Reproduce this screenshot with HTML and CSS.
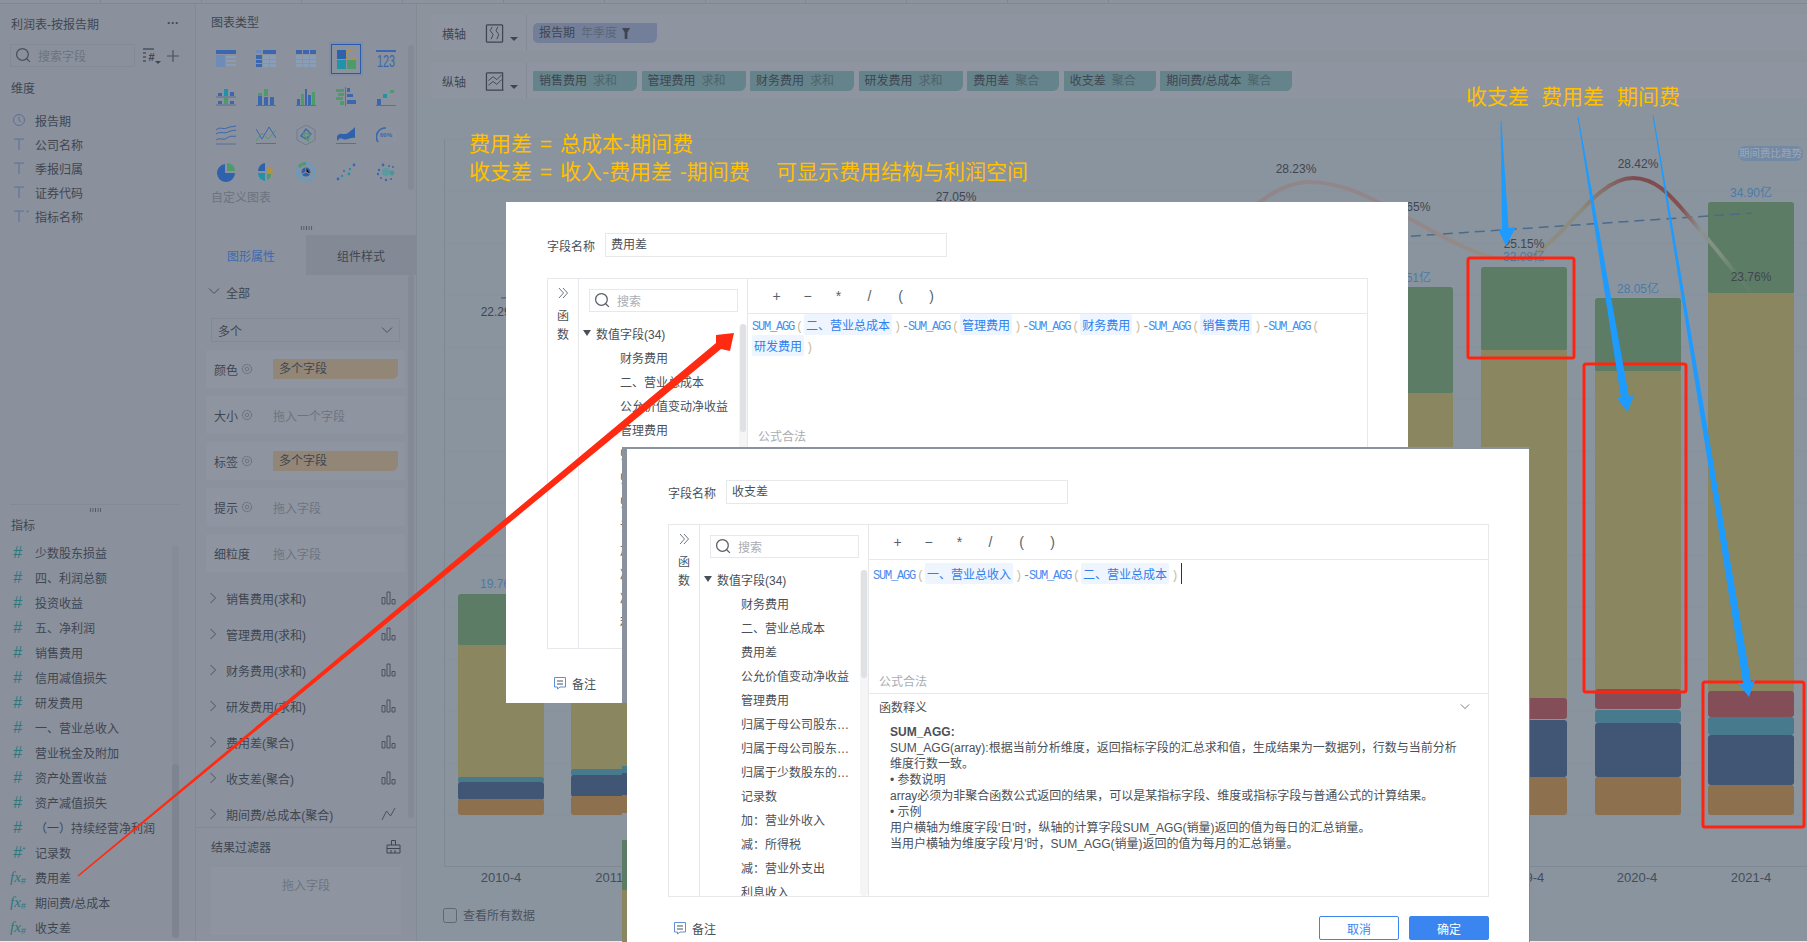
FILE: index.html
```html
<!DOCTYPE html>
<html lang="zh-CN">
<head>
    <meta charset="UTF-8">
    <title>利润表-按报告期</title>
    <link rel="stylesheet" href="styles.css">
</head>
<body>
    <!-- shared icons -->
    <svg class="sprite">
        <symbol id="i-clock" viewBox="0 0 14 14"><circle cx="7" cy="7" r="5.5" fill="none" stroke="currentColor"/><path d="M7 3.8V7.4L9.2 9" fill="none" stroke="currentColor"/></symbol>
        <symbol id="i-text" viewBox="0 0 14 14"><path d="M2 2H12M7 2V13" fill="none" stroke="currentColor"/></symbol>
        <symbol id="i-search" viewBox="0 0 16 16"><circle cx="7" cy="7" r="5.5" fill="none" stroke="currentColor" stroke-width="1.2"/><path d="M11 11L14 14" stroke="currentColor" stroke-width="1.2"/></symbol>
        <symbol id="i-gear" viewBox="0 0 12 12"><circle cx="6" cy="6" r="4.6" fill="none" stroke="currentColor" stroke-width="1.2" stroke-dasharray="2 .6"/><circle cx="6" cy="6" r="1.8" fill="none" stroke="currentColor"/></symbol>
        <symbol id="i-right" viewBox="0 0 10 12"><path d="M2.5 1L7.5 6L2.5 11" fill="none" stroke="currentColor"/></symbol>
        <symbol id="i-down" viewBox="0 0 12 8"><path d="M1 1.5L6 6.5L11 1.5" fill="none" stroke="currentColor"/></symbol>
        <symbol id="i-bars" viewBox="0 0 15 14"><path d="M1 6.5H4V13H1ZM6 1H9V13H6ZM11 8.5H14V13H11Z" fill="none" stroke="currentColor"/></symbol>
        <symbol id="i-line" viewBox="0 0 15 14"><path d="M1 13L5.5 4L9.5 9L14 1" fill="none" stroke="currentColor"/></symbol>
        <symbol id="i-note" viewBox="0 0 14 14"><path d="M1.5 1.5H12.5V11H7L4.5 13V11H1.5Z" fill="none" stroke="#5f8fd0"/><path d="M4 5H10M4 8H10" stroke="#4a5058"/></symbol>
        <symbol id="i-rail" viewBox="0 0 12 12"><path d="M2 1L6.5 6L2 11M6 1L10.5 6L6 11" fill="none" stroke="#6f7680"/></symbol>
    </svg>

    <div class="workspace">
        <div class="tabstrip">
            <i></i><i></i><i></i><i></i><i></i><i></i><i></i><i></i><i></i><i></i><i></i>
        </div>
        <div class="columns">
            <aside class="data-panel">
                <div class="dim-section">
                    <div class="data-title"><span>利润表-按报告期</span><b class="more">···</b></div>
                    <div class="search-row">
                        <div class="data-search"><svg class="search-icon"><use href="#i-search"/></svg>搜索字段</div>
                        <svg class="sort-icon" viewBox="0 0 20 20"><path d="M1 3H12M1 7H4M1 11H4M1 15H4" stroke="#4b525e" stroke-width="1.4"/><text x="6.5" y="15" class="sort-hash">#</text><path d="M13 15H19L16 18Z" fill="#3f4652"/></svg>
                        <svg class="plus-icon" viewBox="0 0 14 14"><path d="M7 1V13M1 7H13" stroke="#4b525e" stroke-width="1.2"/></svg>
                    </div>
                    <h4 class="group-title">维度</h4>
                    <ul class="dim-list">
                        <li class="field"><span class="field-icon dim"><svg><use href="#i-clock"/></svg></span>报告期</li>
                        <li class="field"><span class="field-icon dim"><svg><use href="#i-text"/></svg></span>公司名称</li>
                        <li class="field"><span class="field-icon dim"><svg><use href="#i-text"/></svg></span>季报归属</li>
                        <li class="field"><span class="field-icon dim"><svg><use href="#i-text"/></svg></span>证券代码</li>
                        <li class="field"><span class="field-icon dim"><svg><use href="#i-text"/></svg><sup>*</sup></span>指标名称</li>
                    </ul>
                </div>
                <div class="metric-section">
                    <div class="drag-dots"></div>
                    <h4 class="group-title metric-title">指标</h4>
                    <ul class="metric-list">
                        <li class="metric"><span class="metric-icon">#</span>少数股东损益</li>
                        <li class="metric"><span class="metric-icon">#</span>四、利润总额</li>
                        <li class="metric"><span class="metric-icon">#</span>投资收益</li>
                        <li class="metric"><span class="metric-icon">#</span>五、净利润</li>
                        <li class="metric"><span class="metric-icon">#</span>销售费用</li>
                        <li class="metric"><span class="metric-icon">#</span>信用减值损失</li>
                        <li class="metric"><span class="metric-icon">#</span>研发费用</li>
                        <li class="metric"><span class="metric-icon">#</span>一、营业总收入</li>
                        <li class="metric"><span class="metric-icon">#</span>营业税金及附加</li>
                        <li class="metric"><span class="metric-icon">#</span>资产处置收益</li>
                        <li class="metric"><span class="metric-icon">#</span>资产减值损失</li>
                        <li class="metric"><span class="metric-icon">#</span>（一）持续经营净利润</li>
                        <li class="metric"><span class="metric-icon">#<sup>*</sup></span>记录数</li>
                        <li class="metric"><span class="metric-icon fx">fx<small>#</small></span>费用差</li>
                        <li class="metric"><span class="metric-icon fx">fx<small>#</small></span>期间费/总成本</li>
                        <li class="metric"><span class="metric-icon fx">fx<small>#</small></span>收支差</li>
                    </ul>
                    <div class="metric-scroll"><div class="metric-thumb"></div></div>
                </div>
            </aside>

            <section class="config-panel">
                <h4 class="type-title">图表类型</h4>
                <div class="type-grid">
                    <svg class="type-icon" viewBox="0 0 20 20"><path d="M0 1H20V5H0Z" fill="#3a67ad"/><path d="M0 6H9V18H0Z" fill="#6d8cba"/><path d="M10 7H20V9H10ZM10 11H20V13H10ZM10 15H20V17H10Z" fill="#8a9db7"/></svg>
                    <svg class="type-icon" viewBox="0 0 20 20"><path d="M0 1H5L7 4H0Z" fill="#6d8cba"/><path d="M7 1H20V5H7ZM0 6H6V10H0ZM0 11H6V14H0ZM0 15H6V18H0Z" fill="#3a67ad"/><path d="M7 6H13V10H7ZM14 6H20V10H14ZM7 11H13V14H7ZM14 11H20V14H14ZM7 15H13V18H7ZM14 15H20V18H14Z" fill="#8a9db7"/></svg>
                    <svg class="type-icon" viewBox="0 0 20 20"><path d="M0 1H6V5H0ZM7 1H13V5H7ZM14 1H20V5H14Z" fill="#3a67ad"/><path d="M0 6H6V10H0ZM7 6H13V10H7ZM14 6H20V10H14ZM0 11H6V14H0ZM7 11H13V14H7ZM14 11H20V14H14ZM0 15H6V18H0ZM7 15H13V18H7ZM14 15H20V18H14Z" fill="#8a9db7"/></svg>
                    <div class="type-selected"><svg class="type-icon" viewBox="0 0 20 20"><path d="M1 1H10V10H1Z" fill="#2f62ad"/><path d="M11 1H20V10H11Z" fill="none" stroke="#b79238" stroke-width="2" stroke-dasharray="1.6 1.4"/><path d="M1 11H10V20H1Z" fill="#2193a8"/><path d="M11 11H20V20H11Z" fill="#4f9a6b"/></svg></div>
                    <svg class="type-icon" viewBox="0 0 20 20"><path d="M0 1H20V3H0Z" fill="#3a67ad"/><text x="1" y="18" textLength="18" lengthAdjust="spacingAndGlyphs" class="type-num">123</text></svg>

                    <svg class="type-icon" viewBox="0 0 20 20"><path d="M2 6H6V9H2ZM14 5H18V9H14ZM2 14H6V17H2ZM14 14H18V17H14Z" fill="#3a67ad"/><path d="M8 2H12V9H8Z" fill="#2193a8"/><path d="M8 11H12V17H8Z" fill="#4f9a6b"/><path d="M0 10H20M0 18H20" stroke="#5a6f92"/></svg>
                    <svg class="type-icon" viewBox="0 0 20 20"><path d="M2 9H6V18H2ZM14 10H18V18H14Z" fill="#3a67ad"/><path d="M8 2H12V9H8ZM2 6H6V9H2Z" fill="#4f9a6b"/><path d="M8 10H12V18H8Z" fill="#3a67ad"/><path d="M0 18.5H20" stroke="#5a6f92"/></svg>
                    <svg class="type-icon" viewBox="0 0 20 20"><path d="M1 12H4V18H1ZM12 8H15V18H12Z" fill="#3a67ad"/><path d="M5 7H8V18H5ZM16 5H19V18H16Z" fill="#4f9a6b"/><path d="M9 2H11V18H9Z" fill="#3a67ad"/><path d="M0 18.5H20" stroke="#5a6f92"/></svg>
                    <svg class="type-icon" viewBox="0 0 20 20"><path d="M0 2H8V5H0ZM0 10H7V13H0ZM4 14H8V18H4Z" fill="#4f9a6b"/><path d="M2 6H8V9H2Z" fill="#4f9a6b"/><path d="M11 1H14V5H11ZM11 7H17V10H11ZM11 13H20V17H11Z" fill="#3a67ad"/><path d="M9.5 0V19" stroke="#5a6f92"/></svg>
                    <svg class="type-icon" viewBox="0 0 20 20"><path d="M1 12H5V18H1Z" fill="#3a67ad"/><path d="M7 7H11V11H7Z" fill="#2193a8"/><path d="M14 3H18V6H14Z" fill="#4f9a6b"/><path d="M0 18.5H20" stroke="#5a6f92"/></svg>

                    <svg class="type-icon" viewBox="0 0 20 20"><path d="M0 5C4 1 7 5 11 3S17 2 20 1M0 9C4 6 8 9 12 7S17 6 20 5M0 15C4 12 7 16 11 13S17 12 20 11" fill="none" stroke="#3a67ad"/><path d="M0 19H20" stroke="#5a6f92"/></svg>
                    <svg class="type-icon" viewBox="0 0 20 20"><path d="M0 4L6 14L13 2L20 13" fill="none" stroke="#3a67ad"/><path d="M0 16L6 8L12 14L20 5" fill="none" stroke="#4f9a6b"/><path d="M0 18.5H20" stroke="#5a6f92"/></svg>
                    <svg class="type-icon" viewBox="0 0 20 20"><path d="M10 0L19 5V15L10 20L1 15V5Z" fill="none" stroke="#6f7d92"/><path d="M5 11L10 4L15 9L10 14Z" fill="none" stroke="#3a67ad" stroke-width="1.3"/><path d="M7 8L14 9L12 16Z" fill="none" stroke="#4f9a6b" stroke-width="1.3"/></svg>
                    <svg class="type-icon" viewBox="0 0 20 20"><path d="M1 11C5 6 8 11 12 8S17 4 19 2V13C15 12 10 16 7 14S3 14 1 16Z" fill="#2f62ad"/><path d="M0 18.5H20" stroke="#5a6f92"/></svg>
                    <svg class="type-icon" viewBox="0 0 20 20"><path d="M2 17A9 9 0 0 1 10 3" fill="none" stroke="#3a67ad" stroke-width="1.6"/><path d="M10 3A9 9 0 0 1 18 17" fill="none" stroke="#8a95a5" stroke-width="1.6"/><text x="10" y="12" text-anchor="middle" class="type-pct">60%</text></svg>

                    <svg class="type-icon" viewBox="0 0 20 20"><path d="M9 2A9 9 0 1 0 19 11H9Z" fill="#2f62ad"/><path d="M11 1A8 8 0 0 1 19 9H11Z" fill="#4f9a6b"/></svg>
                    <svg class="type-icon" viewBox="0 0 20 20"><path d="M9 1V9H2A8 8 0 0 1 9 1Z" fill="#2f62ad"/><path d="M11 5A6 6 0 0 1 17 11H11Z" fill="#b79238"/><path d="M11 12H15A6 6 0 0 1 11 18Z" fill="#4f9a6b"/><path d="M9 11V19A8 8 0 0 1 2 11Z" fill="#2193a8"/></svg>
                    <svg class="type-icon" viewBox="0 0 20 20"><circle cx="10" cy="10" r="8.5" fill="none" stroke="#6d9ab8" stroke-width="3"/><path d="M10 1.5A8.5 8.5 0 0 0 3 5" fill="none" stroke="#4f9a6b" stroke-width="3"/><circle cx="10" cy="10" r="4.5" fill="#2f62ad"/><path d="M10 5.5V10L14 12M10 10L6 12" stroke="#8a949e"/></svg>
                    <svg class="type-icon" viewBox="0 0 20 20"><g fill="#3a67ad"><circle cx="2" cy="17" r="1.4"/><circle cx="8" cy="9" r="1"/></g><g fill="#2193a8"><circle cx="6" cy="14" r="1.2"/><circle cx="13" cy="12" r="1.4"/><circle cx="14" cy="7" r="1.2"/></g><circle cx="18" cy="3" r="1.4" fill="#3a67ad"/></svg>
                    <svg class="type-icon" viewBox="0 0 20 20"><circle cx="10" cy="10" r="4" fill="#5b9aa0"/><circle cx="16" cy="11" r="2.4" fill="#4d9497"/><g fill="#3a67ad"><circle cx="3" cy="8" r="1.2"/><circle cx="2" cy="12" r="1.2"/><circle cx="7" cy="3" r="1.4"/><circle cx="13" cy="4" r="1"/><circle cx="17" cy="5" r="1"/><circle cx="5" cy="16" r="1"/><circle cx="10" cy="18" r="1.2"/><circle cx="15" cy="17" r="1"/></g></svg>
                </div>
                <div class="custom-label">自定义图表</div>
                <div class="type-scroll"></div>
                <div class="drag-row"><div class="drag-dots"></div></div>

                <div class="prop-tabs">
                    <div class="prop-tab active">图形属性</div>
                    <div class="prop-tab">组件样式</div>
                </div>
                <div class="prop-body">
                    <div class="prop-head"><svg class="chev-down"><use href="#i-down"/></svg>全部</div>
                    <div class="prop-select">多个<svg class="chev-down"><use href="#i-down"/></svg></div>
                    <div class="slot"><span class="slot-name">颜色<svg class="gear"><use href="#i-gear"/></svg></span><span class="slot-pill">多个字段</span></div>
                    <div class="slot"><span class="slot-name">大小<svg class="gear"><use href="#i-gear"/></svg></span><span class="slot-hint">拖入一个字段</span></div>
                    <div class="slot"><span class="slot-name">标签<svg class="gear"><use href="#i-gear"/></svg></span><span class="slot-pill">多个字段</span></div>
                    <div class="slot"><span class="slot-name">提示<svg class="gear"><use href="#i-gear"/></svg></span><span class="slot-hint">拖入字段</span></div>
                    <div class="slot"><span class="slot-name">细粒度</span><span class="slot-hint">拖入字段</span></div>
                    <div class="series-list">
                        <div class="series"><svg class="chev-right"><use href="#i-right"/></svg>销售费用(求和)<svg class="series-type"><use href="#i-bars"/></svg></div>
                        <div class="series"><svg class="chev-right"><use href="#i-right"/></svg>管理费用(求和)<svg class="series-type"><use href="#i-bars"/></svg></div>
                        <div class="series"><svg class="chev-right"><use href="#i-right"/></svg>财务费用(求和)<svg class="series-type"><use href="#i-bars"/></svg></div>
                        <div class="series"><svg class="chev-right"><use href="#i-right"/></svg>研发费用(求和)<svg class="series-type"><use href="#i-bars"/></svg></div>
                        <div class="series"><svg class="chev-right"><use href="#i-right"/></svg>费用差(聚合)<svg class="series-type"><use href="#i-bars"/></svg></div>
                        <div class="series"><svg class="chev-right"><use href="#i-right"/></svg>收支差(聚合)<svg class="series-type"><use href="#i-bars"/></svg></div>
                        <div class="series"><svg class="chev-right"><use href="#i-right"/></svg>期间费/总成本(聚合)<svg class="series-type"><use href="#i-line"/></svg></div>
                    </div>
                    <div class="prop-scroll"></div>
                </div>
                <div class="filter-section">
                    <div class="filter-head">结果过滤器
                        <svg class="filter-icon" viewBox="0 0 15 15"><path d="M5.5 6V1.5H9.5V6M1 6H14V14H1ZM1 9.5H14M5 11V14M9 11V14" fill="none" stroke="#3f4652"/></svg>
                    </div>
                    <div class="filter-drop">拖入字段</div>
                </div>
            </section>

            <main class="main">
                <div class="axis-bar">
                    <span class="axis-label">横轴</span>
                    <svg class="axis-icon" viewBox="0 0 20 20"><path d="M1 1H18M1 19H18M1 1V19M18 1V19" fill="none" stroke="#3f4652" stroke-width="1.3"/><path d="M7 3L5 7L8 11L6 16M13 3L11 7L14 11L12 16" fill="none" stroke="#3f4652"/></svg>
                    <span class="caret"></span>
                    <div class="pills">
                        <span class="pill pill-x">报告期<em>年季度</em><svg class="funnel" viewBox="0 0 10 12"><path d="M0 0H9L6 5V12H3V5Z" fill="#3f4652"/></svg></span>
                    </div>
                </div>
                <div class="axis-bar">
                    <span class="axis-label">纵轴</span>
                    <svg class="axis-icon" viewBox="0 0 20 20"><path d="M1 1V19H19M1 1H18V19" fill="none" stroke="#3f4652" stroke-width="1.3"/><path d="M3 9L8 5L12 8L17 3M3 14L8 10L12 13L17 8" fill="none" stroke="#3f4652"/></svg>
                    <span class="caret"></span>
                    <div class="pills">
                        <span class="pill">销售费用<em>求和</em></span>
                        <span class="pill">管理费用<em>求和</em></span>
                        <span class="pill">财务费用<em>求和</em></span>
                        <span class="pill">研发费用<em>求和</em></span>
                        <span class="pill">费用差<em>聚合</em></span>
                        <span class="pill">收支差<em>聚合</em></span>
                        <span class="pill">期间费/总成本<em>聚合</em></span>
                    </div>
                </div>

                <!-- viewBox uses page coordinates -->
                <svg class="chart" viewBox="417 99 1390 842">
                    <defs>
                        <linearGradient id="trend" gradientUnits="userSpaceOnUse" x1="1250" y1="0" x2="1751" y2="0">
                            <stop offset="0" stop-color="#8f868b"/>
                            <stop offset=".3" stop-color="#94868a"/>
                            <stop offset=".52" stop-color="#918f86"/>
                            <stop offset=".66" stop-color="#8c8a7c"/>
                            <stop offset=".77" stop-color="#7d4a50"/>
                            <stop offset=".86" stop-color="#85504f"/>
                            <stop offset=".9" stop-color="#8b9290"/>
                            <stop offset=".94" stop-color="#7e9082"/>
                            <stop offset=".97" stop-color="#638067"/>
                            <stop offset="1" stop-color="#627d66"/>
                        </linearGradient>
                    </defs>
                    <path class="grid-lines" d="M444 139H1807M444 191H1807M444 243H1807M444 295H1807M444 347H1807M444 399H1807M444 451H1807M444 503H1807M444 555H1807M444 607H1807M444 659H1807M444 711H1807M444 763H1807M444 815H1807"/>
                    <path class="axis-lines" d="M444.5 139V866.5H1807"/>

                    <g class="bar-2010">
                        <rect class="b-green" x="458" y="594" width="86" height="52" rx="3"/>
                        <rect class="b-olive" x="458" y="645" width="86" height="133" rx="2"/>
                        <rect class="b-teal" x="458" y="777" width="86" height="6" rx="2"/>
                        <rect class="b-navy" x="458" y="782" width="86" height="18" rx="3"/>
                        <rect class="b-brown" x="458" y="799" width="86" height="16" rx="3"/>
                    </g>
                    <g class="bar-2011">
                        <rect class="b-olive" x="571" y="640" width="86" height="130" rx="2"/>
                        <rect class="b-teal" x="571" y="769" width="86" height="7" rx="2"/>
                        <rect class="b-navy" x="571" y="775" width="86" height="22" rx="3"/>
                        <rect class="b-brown" x="571" y="796" width="86" height="19" rx="3"/>
                    </g>
                    <g class="bar-2018">
                        <rect class="b-green" x="1367" y="287" width="86" height="107" rx="3"/>
                        <rect class="b-olive" x="1367" y="393" width="86" height="320" rx="2"/>
                    </g>
                    <g class="bar-2019">
                        <rect class="b-green" x="1481" y="267" width="86" height="84" rx="3"/>
                        <rect class="b-olive" x="1481" y="350" width="86" height="349" rx="2"/>
                        <rect class="b-maroon" x="1481" y="698" width="86" height="21" rx="3"/>
                        <rect class="b-navy" x="1481" y="720" width="86" height="57" rx="3"/>
                        <rect class="b-brown" x="1481" y="777" width="86" height="38" rx="3"/>
                    </g>
                    <g class="bar-2020">
                        <rect class="b-green" x="1595" y="298" width="86" height="74" rx="3"/>
                        <rect class="b-olive" x="1595" y="371" width="86" height="319" rx="2"/>
                        <rect class="b-maroon" x="1595" y="689" width="86" height="20" rx="3"/>
                        <rect class="b-teal" x="1595" y="710" width="86" height="13" rx="3"/>
                        <rect class="b-navy" x="1595" y="723" width="86" height="54" rx="3"/>
                        <rect class="b-brown" x="1595" y="777" width="86" height="38" rx="3"/>
                    </g>
                    <g class="bar-2021">
                        <rect class="b-green" x="1708" y="202" width="86" height="92" rx="3"/>
                        <rect class="b-olive" x="1708" y="293" width="86" height="399" rx="2"/>
                        <rect class="b-maroon" x="1708" y="691" width="86" height="26" rx="3"/>
                        <rect class="b-teal" x="1708" y="717" width="86" height="18" rx="3"/>
                        <rect class="b-navy" x="1708" y="735" width="86" height="50" rx="3"/>
                        <rect class="b-brown" x="1708" y="785" width="86" height="30" rx="3"/>
                    </g>

                    <path class="trend-dash" d="M501 298L1752 213"/>
                    <path class="trend-curve" d="M1250 210C1275 188 1295 182 1309 182C1345 182 1375 200 1410 219C1450 240 1480 260 1515 260C1555 260 1590 178 1633 178C1655 178 1670 195 1683 210C1705 235 1725 260 1751 292"/>

                    <text class="val" x="501" y="588">19.76亿</text>
                    <text class="val" x="1410" y="282">30.51亿</text>
                    <text class="val" x="1524" y="261">32.08亿</text>
                    <text class="val" x="1638" y="293">28.05亿</text>
                    <text class="val" x="1751" y="197">34.90亿</text>
                    <text class="pct" x="501" y="316">22.29%</text>
                    <text class="pct" x="956" y="201">27.05%</text>
                    <text class="pct" x="1296" y="173">28.23%</text>
                    <text class="pct" x="1410" y="211">25.65%</text>
                    <text class="pct" x="1524" y="248">25.15%</text>
                    <text class="pct" x="1638" y="168">28.42%</text>
                    <text class="pct" x="1751" y="281">23.76%</text>
                    <text class="tick" x="501" y="882">2010-4</text>
                    <text class="tick" x="615" y="882">2011-4</text>
                    <text class="tick" x="1524" y="882">2019-4</text>
                    <text class="tick" x="1637" y="882">2020-4</text>
                    <text class="tick" x="1751" y="882">2021-4</text>

                    <rect class="legend-chip" x="1738" y="146" width="65" height="15" rx="7"/>
                    <text class="legend-text" x="1770.5" y="157">期间费比趋势</text>

                    <rect class="view-box" x="443.5" y="908.5" width="13" height="14" rx="2"/>
                    <text class="view-all" x="463" y="920">查看所有数据</text>
                </svg>
            </main>
        </div>
    </div>

    <!-- first formula dialog -->
    <div class="dialog dialog-first">
        <div class="name-row"><label class="name-label">字段名称</label><div class="name-input">费用差</div></div>
        <div class="editor-frame">
            <div class="fn-rail"><svg class="rail-icon"><use href="#i-rail"/></svg><span>函</span><span>数</span></div>
            <div class="field-col">
                <div class="field-search"><svg class="search-icon"><use href="#i-search"/></svg>搜索</div>
                <div class="tree-head"><i class="tree-caret"></i>数值字段(34)</div>
                <ul class="tree">
                    <li>财务费用</li><li>二、营业总成本</li><li>公允价值变动净收益</li><li>管理费用</li>
                    <li>归属于母公司股东…</li><li>归属于母公司股东…</li><li>归属于少数股东的…</li><li>记录数</li>
                    <li>加：营业外收入</li><li>减：所得税</li><li>减：营业外支出</li><li>利息收入</li>
                </ul>
                <div class="tree-scroll"><div class="tree-thumb"></div></div>
            </div>
            <div class="formula-col">
                <div class="op-bar"><span>+</span><span>−</span><span>*</span><span>/</span><span>(</span><span>)</span></div>
                <div class="formula">
                    <p class="formula-code"><b>SUM_AGG</b><u>(</u><span class="token">二、营业总成本</span><u>)</u>-<b>SUM_AGG</b><u>(</u><span class="token">管理费用</span><u>)</u>-<b>SUM_AGG</b><u>(</u><span class="token">财务费用</span><u>)</u>-<b>SUM_AGG</b><u>(</u><span class="token">销售费用</span><u>)</u>-<b>SUM_AGG</b><u>(</u><br><span class="token">研发费用</span><u>)</u></p>
                    <div class="formula-state">公式合法</div>
                </div>
            </div>
        </div>
        <div class="dialog-foot"><svg class="note-icon"><use href="#i-note"/></svg>备注</div>
    </div>

    <!-- second formula dialog -->
    <div class="dialog dialog-second">
        <div class="name-row"><label class="name-label">字段名称</label><div class="name-input">收支差</div></div>
        <div class="editor-frame">
            <div class="fn-rail"><svg class="rail-icon"><use href="#i-rail"/></svg><span>函</span><span>数</span></div>
            <div class="field-col">
                <div class="field-search"><svg class="search-icon"><use href="#i-search"/></svg>搜索</div>
                <div class="tree-head"><i class="tree-caret"></i>数值字段(34)</div>
                <ul class="tree">
                    <li>财务费用</li><li>二、营业总成本</li><li>费用差</li><li>公允价值变动净收益</li><li>管理费用</li>
                    <li>归属于母公司股东…</li><li>归属于母公司股东…</li><li>归属于少数股东的…</li><li>记录数</li>
                    <li>加：营业外收入</li><li>减：所得税</li><li>减：营业外支出</li><li>利息收入</li>
                </ul>
                <div class="tree-scroll"><div class="tree-thumb"></div></div>
            </div>
            <div class="formula-col">
                <div class="op-bar"><span>+</span><span>−</span><span>*</span><span>/</span><span>(</span><span>)</span></div>
                <div class="formula">
                    <p class="formula-code"><b>SUM_AGG</b><u>(</u><span class="token">一、营业总收入</span><u>)</u>-<b>SUM_AGG</b><u>(</u><span class="token">二、营业总成本</span><u>)</u><i class="cursor"></i></p>
                    <div class="formula-state">公式合法</div>
                </div>
                <div class="fn-help">
                    <div class="help-head">函数释义<svg class="chev-down"><use href="#i-down"/></svg></div>
                    <div class="help-text">
                        <strong>SUM_AGG:</strong>
                        <p>SUM_AGG(array):根据当前分析维度，返回指标字段的汇总求和值，生成结果为一数据列，行数与当前分析维度行数一致。</p>
                        <p>• 参数说明</p>
                        <p>array必须为非聚合函数公式返回的结果，可以是某指标字段、维度或指标字段与普通公式的计算结果。</p>
                        <p>• 示例</p>
                        <p>用户横轴为维度字段'日'时，纵轴的计算字段SUM_AGG(销量)返回的值为每日的汇总销量。</p>
                        <p>当用户横轴为维度字段'月'时，SUM_AGG(销量)返回的值为每月的汇总销量。</p>
                    </div>
                </div>
            </div>
        </div>
        <div class="dialog-foot">
            <svg class="note-icon"><use href="#i-note"/></svg>备注
            <button class="btn btn-cancel">取消</button>
            <button class="btn btn-ok">确定</button>
        </div>
    </div>

    <!-- hand annotations drawn on top of the screenshot -->
    <svg class="annotations" viewBox="0 0 1807 942">
        <text class="note-text" x="469" y="151">费用差 = 总成本-期间费</text>
        <text class="note-text" x="469" y="179">收支差 = 收入-费用差 -期间费<tspan x="776">可显示费用结构与利润空间</tspan></text>
        <text class="note-text" x="1466" y="104">收支差</text>
        <text class="note-text" x="1541" y="104">费用差</text>
        <text class="note-text" x="1617" y="104">期间费</text>

        <rect class="red-box" x="1468" y="258" width="106" height="100" rx="2"/>
        <rect class="red-box" x="1584" y="364" width="102" height="328" rx="2"/>
        <rect class="red-box" x="1703" y="682" width="101" height="145" rx="2"/>

        <polygon class="arrow-blue" points="1500.5,121 1501.5,121 1508.5,228 1516,227 1506,246 1498.5,230 1502,229"/>
        <polygon class="arrow-blue" points="1577.5,117 1578.5,117 1629,397 1634,395 1627.5,412 1617,398 1621,398"/>
        <polygon class="arrow-blue" points="1652.5,115 1653.5,115 1751,682 1755,680 1749,697 1738,683 1743,683"/>
        <polygon class="arrow-red" points="77.5,875.5 78.5,876.5 721,349 730,351 734,333 716,335 716,343"/>
    </svg>
</body>
</html>
```

FILE: styles.css
```css
* {
    box-sizing: border-box;
}
html, body {
    margin: 0;
    height: 942px;
    overflow: hidden;
}
body {
    position: relative;
    width: 1807px;
    background: #e8e9eb;
    font-family: "Liberation Sans", "Noto Sans CJK SC", sans-serif;
    font-size: 12px;
    color: #3f4652;
}
ul, p, h4 {
    margin: 0;
    padding: 0;
    list-style: none;
    font-weight: normal;
}
.sprite {
    display: none;
}

/* dimmed page under the dialogs */
.workspace {
    height: 941px;
    background: #8c939d;
    display: flex;
    flex-direction: column;
}
.tabstrip {
    height: 4px;
    display: flex;
    border-bottom: 1px solid #808793;
}
.tabstrip i {
    width: 100.8px;
    border-right: 1px solid #808793;
}
.columns {
    flex: 1;
    display: flex;
    min-height: 0;
}

/* field panel */
.data-panel {
    width: 196px;
    border-right: 1px solid #838a96;
    display: flex;
    flex-direction: column;
    background: #8a919c;
}
.dim-section {
    flex: 1;
    padding-left: 10px;
}
.data-title {
    height: 38px;
    padding-right: 16px;
    display: flex;
    align-items: center;
    justify-content: space-between;
    padding-left: 1px;
}
.more {
    font-size: 12px;
    color: #3f4652;
}
.search-row {
    margin-top: 2px;
    display: flex;
    align-items: center;
}
.data-search {
    width: 125px;
    height: 23px;
    border: 1px solid #838a96;
    display: flex;
    align-items: center;
    color: #6c7480;
    padding-left: 4px;
}
.search-icon {
    width: 17px;
    height: 17px;
    margin-right: 6px;
    color: #4b525e;
}
.sort-icon {
    width: 20px;
    height: 20px;
    margin-left: 7px;
}
.sort-hash {
    font-size: 11px;
    font-weight: bold;
    fill: #3f4652;
}
.plus-icon {
    width: 14px;
    height: 14px;
    margin-left: 4px;
}
.group-title {
    height: 24px;
    line-height: 24px;
    margin-top: 10px;
    padding-left: 1px;
}
.dim-list {
    margin-top: 7px;
}
.field {
    height: 24px;
    display: flex;
    align-items: center;
}
.field-icon {
    width: 25px;
    padding-left: 2px;
    display: flex;
    color: #5a6f9c;
}
.field-icon svg {
    width: 14px;
    height: 14px;
}
.field-icon sup {
    font-size: 8px;
    line-height: 8px;
}
.metric-section {
    height: 437px;
    position: relative;
    padding-left: 10px;
}
.metric-section::before {
    content: "";
    display: block;
    width: 170px;
    border-top: 1px solid #838a96;
}
.drag-dots {
    width: 13px;
    height: 4px;
    margin: 4px auto 0;
    background: radial-gradient(circle, #4f5662 0.8px, transparent 1px) 0 0 / 2.6px 2px;
}
.metric-section .drag-dots {
    margin: 3px 0 0 79px;
}
.metric-title {
    margin-top: 2px;
}
.metric-list {
    margin-top: 2px;
}
.metric {
    height: 25px;
    display: flex;
    align-items: center;
}
.metric-icon {
    width: 25px;
    padding-left: 3px;
    font-size: 16px;
    font-style: italic;
    color: #2f777c;
    white-space: nowrap;
}
.metric-icon sup {
    font-size: 8px;
    line-height: 8px;
}
.metric-icon.fx {
    padding-left: 0;
    font-family: "Liberation Serif", serif;
    font-size: 15px;
}
.metric-icon small {
    font-size: 9px;
    font-family: "Liberation Sans", sans-serif;
    vertical-align: -2px;
}
.metric-scroll {
    position: absolute;
    left: 172px;
    top: 41px;
    width: 7px;
    height: 393px;
    border-radius: 4px;
    background: #868d98;
}
.metric-thumb {
    margin-top: 219px;
    height: 174px;
    border-radius: 4px;
    background: #7e8591;
}

/* chart options panel */
.config-panel {
    width: 221px;
    border-right: 1px solid #838a96;
    position: relative;
    background: #8b929d;
    display: flex;
    flex-direction: column;
}
.type-title {
    height: 38px;
    line-height: 38px;
    margin-bottom: -2px;
    padding-left: 15px;
}
.type-grid {
    display: grid;
    grid-template-columns: repeat(5, 40px);
    grid-template-rows: repeat(3, 38px) 35px;
    justify-items: center;
    align-items: center;
    padding-left: 10px;
}
.type-icon {
    width: 20px;
    height: 20px;
}
.type-selected {
    width: 30px;
    height: 30px;
    border: 1px solid #2b5aa8;
    box-shadow: 0 0 0 2px #7e8ea8;
    display: flex;
    align-items: center;
    justify-content: center;
}
.type-num {
    font-size: 17px;
    fill: #3a67ad;
}
.type-pct {
    font-size: 6px;
    font-weight: bold;
    fill: #3a67ad;
}
.custom-label {
    height: 16px;
    line-height: 16px;
    margin-top: 1px;
    padding-left: 15px;
    color: #6c7480;
}
.type-scroll {
    position: absolute;
    left: 212px;
    top: 41px;
    width: 6px;
    height: 145px;
    border-radius: 3px;
    background: #848b96;
}
.drag-row {
    height: 29px;
    padding-top: 20px;
}
.drag-row .drag-dots {
    margin-top: 0;
}
.prop-tabs {
    height: 40px;
    display: flex;
}
.prop-tab {
    flex: 1;
    display: flex;
    align-items: center;
    justify-content: center;
    background: #838a96;
}
.prop-tab.active {
    background: #8b929d;
    color: #3f68ad;
}
.prop-body {
    height: 552px;
    position: relative;
    overflow: hidden;
    padding: 5px 0 0 10px;
}
.prop-head {
    height: 24px;
    display: flex;
    align-items: center;
    padding-left: 20px;
    position: relative;
}
.chev-down {
    width: 12px;
    height: 8px;
    color: #4b525e;
}
.prop-head .chev-down {
    position: absolute;
    left: 2px;
    top: 7px;
}
.prop-select {
    width: 189px;
    height: 24px;
    margin: 14px 0 8px 5px;
    padding: 0 6px;
    border: 1px solid #838a96;
    display: flex;
    align-items: center;
    justify-content: space-between;
}
.slot {
    width: 199px;
    height: 38px;
    margin-bottom: 8px;
    padding-left: 8px;
    background: #8f95a0;
    display: flex;
    align-items: center;
}
.slot-name {
    width: 59px;
    display: flex;
    align-items: center;
}
.gear {
    width: 12px;
    height: 12px;
    margin-left: 3px;
    color: #6c7480;
}
.slot-pill {
    width: 125px;
    height: 20px;
    line-height: 20px;
    padding-left: 6px;
    background: #928677;
    border-radius: 0 0 6px 0;
}
.slot-hint {
    color: #6c7480;
}
.series {
    height: 36px;
    padding-left: 20px;
    position: relative;
    display: flex;
    align-items: center;
}
.chev-right {
    position: absolute;
    left: 2px;
    top: 12px;
    width: 10px;
    height: 12px;
    color: #4b525e;
}
.series-type {
    position: absolute;
    left: 175px;
    top: 11px;
    width: 15px;
    height: 14px;
    color: #4b525e;
}
.prop-scroll {
    position: absolute;
    left: 212px;
    top: 0;
    width: 6px;
    height: 543px;
    border-radius: 3px;
    background: #838a96;
}
.filter-section {
    flex: 1;
    border-top: 1px solid #838a96;
    padding: 0 15px;
}
.filter-head {
    height: 36px;
    margin-bottom: 3px;
    display: flex;
    align-items: center;
    justify-content: space-between;
}
.filter-icon {
    width: 15px;
    height: 15px;
}
.filter-drop {
    width: 190px;
    height: 68px;
    padding-top: 10px;
    text-align: center;
    line-height: 18px;
    background: #8f95a0;
    color: #6c7480;
}

/* main area */
.main {
    flex: 1;
    min-width: 0;
    padding-top: 11px;
    display: flex;
    flex-direction: column;
}
.axis-bar {
    height: 36px;
    margin: 0 0 12px 14px;
    padding-left: 11px;
    background: #8f95a0;
    display: flex;
    align-items: center;
    flex: none;
}
.axis-bar:nth-child(2) {
    margin-bottom: 0;
}
.axis-label {
    width: 43px;
}
.axis-icon {
    width: 20px;
    height: 19px;
}
.caret {
    width: 0;
    height: 0;
    margin: 11px 0 0 5px;
    border: 4px solid transparent;
    border-top: 4px solid #3f4652;
    border-bottom: 0;
}
.pills {
    height: 36px;
    margin-left: 8px;
    padding-left: 6px;
    border-left: 1px solid #838a96;
    display: flex;
    align-items: center;
    gap: 4.5px;
}
.pill {
    height: 20px;
    line-height: 20px;
    padding: 0 20px 0 6px;
    background: #64838a;
    border-radius: 1px 1px 6px 1px;
    white-space: nowrap;
}
.pill em {
    font-style: normal;
    margin-left: 6px;
    color: #4f636d;
}
.pill-x {
    background: #737f99;
    display: flex;
    align-items: center;
    border-radius: 5px 1px 6px 5px;
}
.pill-x em {
    color: #5d6677;
}
.funnel {
    width: 9px;
    height: 11px;
    margin-left: 5px;
    margin-right: 6px;
}
.chart {
    display: block;
    flex: none;
    width: 1390px;
    height: 842px;
    background: #8a949e;
}
.grid-lines {
    stroke: #87919b;
    fill: none;
}
.axis-lines {
    stroke: #7f8893;
    fill: none;
}
.b-green { fill: #5c7c65; }
.b-olive { fill: #8a865f; }
.b-maroon { fill: #844e58; }
.b-teal { fill: #467a8c; }
.b-navy { fill: #415674; }
.b-brown { fill: #8d704e; }
.trend-dash {
    stroke: #4d6a8a;
    stroke-width: 1.5;
    stroke-dasharray: 10 6;
    fill: none;
}
.trend-curve {
    stroke: url(#trend);
    stroke-width: 4;
    fill: none;
}
.val, .pct, .tick, .legend-text {
    text-anchor: middle;
}
.val {
    font-size: 12px;
    fill: #4a7ba6;
}
.pct {
    font-size: 12px;
    fill: #3f4652;
}
.tick {
    font-size: 13px;
    fill: #454d5b;
}
.legend-chip {
    fill: #7389a4;
}
.legend-text {
    font-size: 10.5px;
    fill: #9aa8b8;
}
.view-box {
    fill: none;
    stroke: #5f6773;
}
.view-all {
    font-size: 12px;
    fill: #4b525e;
}

/* dialogs */
.dialog {
    position: absolute;
    background: #fff;
    color: #4a5058;
    padding: 31px 0 0 41px;
}
.dialog-first {
    left: 506px;
    top: 202px;
    width: 902px;
    height: 501px;
}
.dialog-second {
    left: 627px;
    top: 449px;
    width: 903px;
    height: 493px;
    border-right: 1px solid #7f8893;
}
.dialog-second::before {
    content: "";
    position: absolute;
    left: -5px;
    top: -2px;
    bottom: 0;
    width: 5px;
    background: linear-gradient(to bottom, #8a939d 0 256px, #8a865f 256px 319px, #467a8c 319px 326px, #415674 326px 348px, #8d704e 348px 366px, #8a949e 366px 393px, #5c7c65 393px 443px, #8a865f 443px);
}
.dialog-second::after {
    content: "";
    position: absolute;
    left: -5px;
    right: 0;
    top: -2px;
    height: 2px;
    background: #8a939d;
}
.name-row {
    height: 24px;
    display: flex;
    align-items: center;
}
.name-label {
    width: 58px;
}
.name-input {
    width: 342px;
    height: 24px;
    line-height: 22px;
    padding-left: 5px;
    border: 1px solid #e6e8eb;
}
.editor-frame {
    margin-top: 21px;
    width: 821px;
    height: 371px;
    border: 1px solid #e6e8eb;
    display: flex;
    overflow: hidden;
}
.dialog-second .editor-frame {
    margin-top: 20px;
    height: 373px;
}
.fn-rail {
    width: 31px;
    border-right: 1px solid #e6e8eb;
    display: flex;
    flex-direction: column;
    align-items: center;
    padding-top: 8px;
    flex: none;
}
.rail-icon {
    width: 12px;
    height: 12px;
    margin-bottom: 8px;
}
.fn-rail span {
    height: 19px;
    line-height: 19px;
}
.field-col {
    width: 169px;
    border-right: 1px solid #e6e8eb;
    position: relative;
    flex: none;
    padding-top: 10px;
}
.field-search {
    width: 149px;
    height: 23px;
    margin-left: 10px;
    padding-left: 4px;
    border: 1px solid #e6e8eb;
    display: flex;
    align-items: center;
    color: #a9adb3;
}
.field-search .search-icon {
    color: #5a6069;
}
.tree-head {
    height: 24px;
    margin: 9px 0 2px;
    padding-left: 17px;
    position: relative;
    display: flex;
    align-items: center;
}
.tree-caret {
    position: absolute;
    left: 4px;
    top: 9px;
    border: 4px solid transparent;
    border-top: 6px solid #4a5058;
    border-bottom: 0;
}
.tree li {
    height: 24px;
    line-height: 24px;
    padding-left: 41px;
    white-space: nowrap;
}
.tree-scroll {
    position: absolute;
    right: 0;
    top: 45px;
    bottom: 0;
    width: 8px;
    background: #f5f5f5;
    border-radius: 4px;
}
.tree-thumb {
    width: 6px;
    height: 108px;
    margin: 0 auto;
    border-radius: 3px;
    background: #dfe1e5;
}
.formula-col {
    flex: 1;
    min-width: 0;
    display: flex;
    flex-direction: column;
}
.op-bar {
    height: 35px;
    flex: none;
    padding-left: 13px;
    border-bottom: 1px solid #e6e8eb;
    display: flex;
    align-items: center;
}
.op-bar span {
    width: 31px;
    text-align: center;
    font-size: 14px;
    color: #5a6069;
}
.formula {
    height: 134px;
    flex: none;
    position: relative;
    border-bottom: 1px solid #e6e8eb;
    padding: 3px 4px;
}
.dialog-first .formula {
    border-bottom: 0;
}
.formula-code {
    font-family: "Liberation Mono", "Noto Sans CJK SC", monospace;
    font-size: 12px;
    letter-spacing: -1.2px;
    line-height: 21px;
    color: #888;
    white-space: nowrap;
}
.formula-code b {
    font-weight: normal;
    color: #4a8cf0;
}
.formula-code u {
    text-decoration: none;
    color: #c8bd9c;
    padding: 0 2px;
}
.token {
    font-family: "Noto Sans CJK SC", sans-serif;
    font-size: 12px;
    letter-spacing: 0;
    line-height: 1;
    padding: 2px;
    color: #2f80ed;
    background: #eef5fe;
    border-radius: 2px;
}
.cursor {
    display: inline-block;
    width: 1px;
    height: 21px;
    margin-left: 2px;
    vertical-align: -5px;
    background: #2a3342;
}
.formula-state {
    position: absolute;
    left: 10px;
    bottom: 3px;
    height: 16px;
    line-height: 16px;
    color: #a9adb3;
}
.help-head {
    height: 24px;
    padding: 0 14px 0 10px;
    display: flex;
    align-items: center;
    justify-content: space-between;
}
.help-head .chev-down {
    width: 10px;
    height: 7px;
    margin-right: 4px;
    color: #5a6069;
}
.help-text {
    padding: 6px 26px 0 21px;
    line-height: 16px;
}
.help-text strong {
    display: block;
}
.dialog-foot {
    height: 24px;
    margin-top: 22px;
    padding-left: 6px;
    display: flex;
    align-items: center;
}
.dialog-second .dialog-foot {
    margin-top: 19px;
    padding-left: 5px;
}
.note-icon {
    width: 14px;
    height: 14px;
    margin-right: 5px;
}
.btn {
    width: 80px;
    height: 24px;
    padding: 0;
    border-radius: 2px;
    font-family: inherit;
    font-size: 12px;
    border: 1px solid #3a85f0;
}
.btn-cancel {
    margin-left: auto;
    background: #fff;
    color: #3a85f0;
}
.btn-ok {
    margin-left: 10px;
    margin-right: 40px;
    background: #3a85f0;
    color: #fff;
}

/* annotation layer */
.annotations {
    position: absolute;
    left: 0;
    top: 0;
    width: 1807px;
    height: 942px;
    pointer-events: none;
}
.note-text {
    font-size: 21px;
    word-spacing: 2px;
    fill: #ffc000;
}
.red-box {
    fill: none;
    stroke: #ff2410;
    stroke-width: 3px;
}
.arrow-blue {
    fill: #1e9bff;
}
.arrow-red {
    fill: #ff2a12;
}
```
